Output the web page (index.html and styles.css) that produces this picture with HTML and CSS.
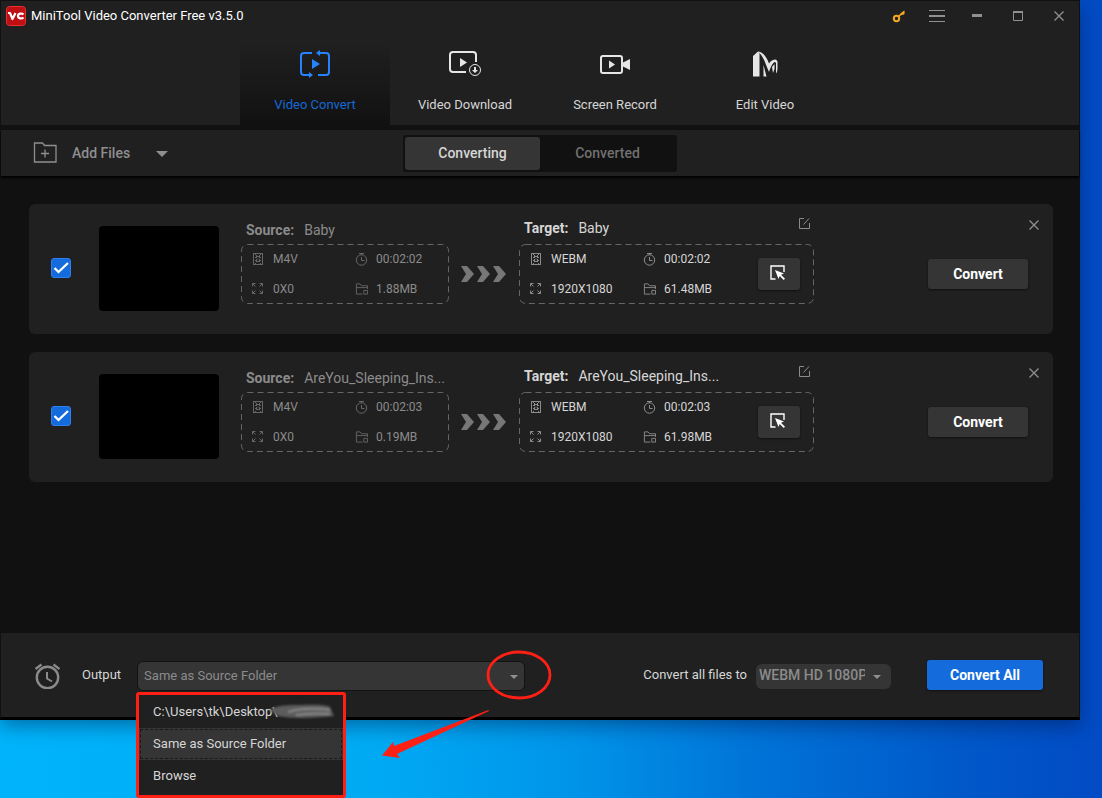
FILE: index.html
```html
<!DOCTYPE html>
<html lang="en">
<head>
<meta charset="utf-8">
<title>MiniTool Video Converter Free v3.5.0</title>
<link rel="stylesheet" href="styles.css">
</head>
<body>
<svg class="sprite" aria-hidden="true">
  <symbol id="i-film" viewBox="0 0 13 14"><path d="M1 1.500h10M1 12.500h10M1.500 1v12M10.500 1v12" fill="none" stroke="currentColor"/><path d="M4.500 3v8M7.500 3v8" stroke="currentColor" stroke-dasharray="3 1"/><path d="M5 4.500h2M5 9.500h2M3 2.500h1M8 2.500h1M3 5.500h1M8 5.500h1M3 8.500h1M8 8.500h1M3 11.500h1M8 11.500h1M5.500 7h1" stroke="currentColor"/></symbol>
  <symbol id="i-clock" viewBox="0 0 13 14"><path d="M4 1.500h5M6.500 2v1M6.500 5v3.500h3" fill="none" stroke="currentColor"/><circle cx="6.500" cy="8" r="5.200" fill="none" stroke="currentColor"/></symbol>
  <symbol id="i-size" viewBox="0 0 13 14"><path d="M.5 4.500v-3h3M.5 1.500l3 3M7.500 1.500h3v3M10.500 1.500l-3 3M.5 8.500v3h3M.5 11.500l3-3M10.500 8.500v3h-3M10.500 11.500l-3-3" fill="none" stroke="currentColor"/></symbol>
  <symbol id="i-folder" viewBox="0 0 14 14"><path d="M8 12.500H1.500v-11h4l1.500 2h6.500V7M1.500 5.500h12M9.500 8.500h4v4h-4z" fill="none" stroke="currentColor"/></symbol>
  <symbol id="i-close" viewBox="0 0 12 12"><path d="M1.500 1.500l9 9M10.500 1.500l-9 9" fill="none" stroke="currentColor" stroke-width="1.300"/></symbol>
  <symbol id="i-chevrons" viewBox="0 0 46 16"><path d="M0 0h6l7 8-7 8H0l5-8zM16 0h6l7 8-7 8h-6l5-8zM32 0h6l7 8-7 8h-6l5-8z" fill="currentColor"/></symbol>
  <symbol id="i-edit" viewBox="0 0 12 12"><path d="M6 1.500H1.500v10h10V6M5.500 7.500L11 1.500" fill="none" stroke="currentColor"/></symbol>
  <symbol id="i-pick" viewBox="0 0 16 16"><path d="M5.500 14H1V1h13v6" fill="none" stroke="currentColor" stroke-width="1.400"/><path d="M5 5l9 3.500-3 1.200 4 4-1.300 1.300-4-4L8.500 14z" fill="currentColor"/></symbol>
  <symbol id="i-check" viewBox="0 0 20 20"><path d="M3.500 10l4 4L17 5" fill="none" stroke="#fff" stroke-width="2.300"/></symbol>
  <symbol id="i-caret" viewBox="0 0 8 4"><path d="M0 0h8L4 4z" fill="currentColor"/></symbol>
</svg>

<main class="window">
  <header class="header">
    <div class="titlebar">
      <svg class="logo" viewBox="0 0 20 20" aria-hidden="true"><rect x=".5" y=".5" width="19" height="19" rx="3" fill="#c00f14" stroke="#e3322f"/><path d="M2 7h2l2.500 6L9.500 7M17.500 8.500c-1.500-1.500-5.500-1.200-5.500 1.500s4 3 5.500 1.500" fill="none" stroke="#fff" stroke-width="2.200" stroke-linejoin="round"/></svg>
      <h1 class="title">MiniTool Video Converter Free v3.5.0</h1>
      <div class="controls">
        <button class="icon-btn key" aria-label="Register"><svg width="14" height="14" viewBox="0 0 14 14"><circle cx="4.500" cy="9.500" r="2.700" fill="none" stroke="currentColor" stroke-width="2"/><path d="M6.500 7.500L12 2.500" stroke="currentColor" stroke-width="1.600"/><path d="M8 5l4.500-3.500V5l-1.500 1-1-.5-1 1z" fill="currentColor"/></svg></button>
        <button class="icon-btn menu-btn" aria-label="Menu"><svg width="16" height="14" viewBox="0 0 16 14"><path d="M0 1.500h16M0 12.500h16" stroke="currentColor"/><path d="M0 7h16" stroke="currentColor" stroke-width="2"/></svg></button>
        <button class="icon-btn" aria-label="Minimize"><svg width="12" height="12" viewBox="0 0 12 12"><path d="M1 5.500h10" stroke="currentColor" stroke-width="3"/></svg></button>
        <button class="icon-btn" aria-label="Maximize"><svg width="12" height="12" viewBox="0 0 12 12"><path d="M1.500 1.500h9v9h-9z" fill="none" stroke="currentColor"/><path d="M1 2h10" stroke="currentColor" stroke-width="2"/></svg></button>
        <button class="icon-btn" aria-label="Close"><svg width="12" height="12"><use href="#i-close"/></svg></button>
      </div>
    </div>
    <nav class="tabs">
      <button class="tab active"><svg width="32" height="28" viewBox="0 0 32 28"><path d="M13 3H5a3 3 0 0 0-3 3v16a3 3 0 0 0 3 3h8M20 3h7a3 3 0 0 1 3 3v16a3 3 0 0 1-3 3h-8" fill="none" stroke="currentColor" stroke-width="2"/><path d="M17 3l4-3v6zM14 25l-4-3v6zM13 9v10l8-5z" fill="currentColor"/></svg><span>Video Convert</span></button>
      <button class="tab"><svg width="32" height="28" viewBox="0 0 32 28"><path d="M17 22H4a3 3 0 0 1-3-3V5a3 3 0 0 1 3-3h20a3 3 0 0 1 3 3v7" fill="none" stroke="currentColor" stroke-width="2"/><path d="M11 8v9l7-4.500z" fill="currentColor"/><circle cx="26" cy="20" r="5.500" fill="none" stroke="currentColor"/><path d="M25 17h2v3h2l-3 3-3-3h2z" fill="currentColor"/></svg><span>Video Download</span></button>
      <button class="tab"><svg width="32" height="28" viewBox="0 0 32 28"><rect x="2" y="6" width="21" height="17" rx="2" fill="none" stroke="currentColor" stroke-width="2"/><path d="M10 10.500v8l6-4zM23 13l8-4v11l-8-4z" fill="currentColor"/></svg><span>Screen Record</span></button>
      <button class="tab"><svg width="32" height="28" viewBox="0 0 32 28"><path d="M4 6l5-4.500L10.500 3v23.500H4z" fill="currentColor"/><path d="M9 1.500c5 .5 8.500 5 11 12 1.500-2.500 4-4 7-4l1.500 2v6c0 3-.5 5-1.500 6V13l-1-1c-2 .5-4.500 5-6 10l-2.500-6C15.500 10 13 5 9 1.500z" fill="currentColor"/><path d="M14.500 15v11.500h3zM23 17l2.500-3v5L24 23z" fill="currentColor"/></svg><span>Edit Video</span></button>
    </nav>
  </header>

  <section class="toolbar">
    <button class="add"><svg width="24" height="22" viewBox="0 0 24 22"><path d="M1.500 20V1h8l2 2.500H23V20zM8 11.500h8M12 7.500v8" fill="none" stroke="currentColor" stroke-width="1.300"/></svg><span>Add Files</span><svg class="add-caret"><use href="#i-caret"/></svg></button>
    <div class="segment"><button class="seg on">Converting</button><button class="seg">Converted</button></div>
  </section>

  <section class="list">
    <article class="card">
      <label class="check"><input type="checkbox" checked aria-label="Select Baby"><svg><use href="#i-check"/></svg></label>
      <div class="thumb"></div>
      <div class="info source">
        <p class="name"><b>Source:</b><span>Baby</span></p>
        <div class="box"><svg class="dash"><rect rx="6"/></svg>
          <div class="meta">
            <span><svg><use href="#i-film"/></svg>M4V</span><span><svg><use href="#i-clock"/></svg>00:02:02</span>
            <span><svg><use href="#i-size"/></svg>0X0</span><span><svg><use href="#i-folder"/></svg>1.88MB</span>
          </div>
        </div>
      </div>
      <svg class="chevrons"><use href="#i-chevrons"/></svg>
      <div class="info target">
        <p class="name"><b>Target:</b><span>Baby</span><button class="edit" aria-label="Rename"><svg width="12" height="12"><use href="#i-edit"/></svg></button></p>
        <div class="box"><svg class="dash"><rect rx="6"/></svg>
          <div class="meta">
            <span><svg><use href="#i-film"/></svg>WEBM</span><span><svg><use href="#i-clock"/></svg>00:02:02</span>
            <span><svg><use href="#i-size"/></svg>1920X1080</span><span><svg><use href="#i-folder"/></svg>61.48MB</span>
          </div>
          <button class="pick" aria-label="Choose format"><svg width="16" height="16"><use href="#i-pick"/></svg></button>
        </div>
      </div>
      <div class="actions">
        <button class="remove" aria-label="Remove"><svg width="12" height="12"><use href="#i-close"/></svg></button>
        <button class="convert">Convert</button>
      </div>
    </article>

    <article class="card">
      <label class="check"><input type="checkbox" checked aria-label="Select AreYou_Sleeping"><svg><use href="#i-check"/></svg></label>
      <div class="thumb"></div>
      <div class="info source">
        <p class="name"><b>Source:</b><span>AreYou_Sleeping_Ins...</span></p>
        <div class="box"><svg class="dash"><rect rx="6"/></svg>
          <div class="meta">
            <span><svg><use href="#i-film"/></svg>M4V</span><span><svg><use href="#i-clock"/></svg>00:02:03</span>
            <span><svg><use href="#i-size"/></svg>0X0</span><span><svg><use href="#i-folder"/></svg>0.19MB</span>
          </div>
        </div>
      </div>
      <svg class="chevrons"><use href="#i-chevrons"/></svg>
      <div class="info target">
        <p class="name"><b>Target:</b><span>AreYou_Sleeping_Ins...</span><button class="edit" aria-label="Rename"><svg width="12" height="12"><use href="#i-edit"/></svg></button></p>
        <div class="box"><svg class="dash"><rect rx="6"/></svg>
          <div class="meta">
            <span><svg><use href="#i-film"/></svg>WEBM</span><span><svg><use href="#i-clock"/></svg>00:02:03</span>
            <span><svg><use href="#i-size"/></svg>1920X1080</span><span><svg><use href="#i-folder"/></svg>61.98MB</span>
          </div>
          <button class="pick" aria-label="Choose format"><svg width="16" height="16"><use href="#i-pick"/></svg></button>
        </div>
      </div>
      <div class="actions">
        <button class="remove" aria-label="Remove"><svg width="12" height="12"><use href="#i-close"/></svg></button>
        <button class="convert">Convert</button>
      </div>
    </article>
  </section>

  <footer class="footer">
    <svg class="alarm" viewBox="0 0 26 26" aria-hidden="true"><circle cx="13.500" cy="14.500" r="10.700" fill="none" stroke="currentColor" stroke-width="2.400"/><path d="M13 9v6.500l5 3" fill="none" stroke="currentColor" stroke-width="2"/><path d="M1.500 6l6-4.500M19.500 1.500l6 4.500" stroke="currentColor" stroke-width="2.200"/></svg>
    <label class="label" for="output">Output</label>
    <div class="field">
      <select id="output" class="select"><option>Same as Source Folder</option></select>
      <svg class="caret"><use href="#i-caret"/></svg>
      <svg class="ring" viewBox="0 0 66 50"><ellipse cx="33" cy="25" rx="31" ry="23" fill="none" stroke="#ff2015" stroke-width="2.800"/></svg>
      <svg class="pointer" viewBox="0 0 108 48"><path d="M106.500 0L107 1 15 44l3 4L0 45.500 11 32l1 4z" fill="#ff2015"/></svg>
      <div class="menu">
        <button class="item path">C:\Users\tk\Desktop\<svg class="smudge" viewBox="0 0 72 20"><defs><filter id="soft"><feGaussianBlur stdDeviation="1.300"/></filter></defs><g filter="url(#soft)"><path d="M3 8c6-4 16-5 28-5 14 0 28-1 33 2l4 9c-18 2-42 3-56 0z" fill="#5c5c5c"/><path d="M22 10c14-4 26-4 42-2M30 13c12-2 20-2 34-1" stroke="#888" stroke-width="2" fill="none"/></g></svg></button>
        <button class="item current">Same as Source Folder</button>
        <button class="item">Browse</button>
      </div>
    </div>
    <label class="label all" for="format">Convert all files to</label>
    <div class="format">
      <select id="format" class="select"><option>WEBM HD 1080P</option></select>
      <svg class="caret"><use href="#i-caret"/></svg>
    </div>
    <button class="convert-all">Convert All</button>
  </footer>
</main>
</body>
</html>
```
FILE: styles.css
```css
* { box-sizing: border-box; }

body {
  margin: 0;
  min-height: 100vh;
  padding: 0 22px 78px 0;
  display: flex;
  font: 13px/20px Roboto, "Liberation Sans", sans-serif;
  color: #d6d6d6;
  background: linear-gradient(90deg, #00b4fb 0%, #00aaf3 34%, #0094e9 52%, #0074d8 68%, #0057c8 88%, #024bc4 100%);
}

button, select, input { font: inherit; color: inherit; margin: 0; }
button { border: 0; padding: 0; background: none; }
svg { display: block; flex: none; }
h1, p { margin: 0; }

.sprite { position: absolute; width: 0; height: 0; }

.window {
  flex: 1;
  min-width: 0;
  display: flex;
  flex-direction: column;
  background: #111;
  border: 1px solid #111;
  border-bottom: 3px solid #000;
  box-shadow: 0 6px 18px rgba(0, 10, 50, .4);
}

.header { background: #202020; margin-bottom: 5px; }

.titlebar { display: flex; align-items: center; height: 30px; padding: 0 14px 0 5px; margin-bottom: 10px; }
.logo { width: 20px; height: 20px; margin-right: 5px; }
.title { font-size: 13px; font-weight: 400; color: #fff; }
.controls { display: flex; align-items: center; margin-left: auto; color: #909090; }
.icon-btn { display: grid; place-items: center; width: 12px; height: 20px; margin-left: 29px; }
.icon-btn.key { width: 14px; color: #f5a623; }
.icon-btn.menu-btn { width: 16px; margin-left: 23px; margin-right: -3px; }

.tabs { display: flex; justify-content: center; }
.tab {
  width: 150px;
  height: 84px;
  display: flex;
  flex-direction: column;
  align-items: center;
  padding-top: 9px;
  gap: 17px;
  color: #d6d6d6;
}
.tab svg { color: #e6e6e6; overflow: visible; }
.tab.active { color: #1669d6; background: linear-gradient(#202020, #111); }
.tab.active svg { color: #2583ff; }

.toolbar {
  display: grid;
  grid-template-columns: 1fr auto 1fr;
  align-items: center;
  height: 46px;
  padding: 0 32px;
  background: #202020;
  box-shadow: 0 2px 2px #000;
}
.add { display: flex; align-items: center; justify-self: start; color: #8f8f8f; font-size: 14px; font-weight: 500; }
.add span { margin: 0 26px 0 15px; }
.add-caret { width: 12px; height: 6px; margin-top: 2px; }
.segment { display: flex; padding: 2px; height: 37px; background: #111; border-radius: 3px; font-size: 14px; font-weight: 500; }
.seg { width: 135px; border-radius: 3px; color: #707070; }
.seg.on { background: #353535; color: #d6d6d6; }

.list { flex: 1; padding: 28px 26px 28px 28px; display: flex; flex-direction: column; gap: 18px; }

.card {
  display: flex;
  align-items: flex-start;
  height: 130px;
  padding: 14px 13px 0 22px;
  border-radius: 6px;
  background: #202020;
}
.check { display: grid; margin: 40px 28px 0 0; }
.check input, .check svg { grid-area: 1 / 1; width: 20px; height: 20px; }
.check input { appearance: none; border: 1px solid #2f80ee; border-radius: 3px; background: #146bdc; }
.check svg { z-index: 1; pointer-events: none; }
.thumb { width: 120px; height: 85px; margin: 8px 22px 0 0; border-radius: 4px; background: #000; }

.info { flex: none; }
.name { display: flex; align-items: center; height: 20px; padding-left: 5px; gap: 10px; font-size: 14px; }
.name b { font-weight: 700; }
.source { width: 208px; color: #8b8b8b; }
.source .name { margin: 2px 0 4px; }
.target { width: 295px; color: #d6d6d6; }
.target .name { margin-bottom: 6px; }
.edit { margin: 0 4px 10px auto; color: #8b8b8b; }

.box { position: relative; display: flex; height: 60px; padding-left: 11px; font-size: 12px; }
.dash { position: absolute; inset: 0; width: 100%; height: 100%; pointer-events: none; }
.dash rect { x: .5px; y: .5px; width: calc(100% - 1px); height: calc(100% - 1px); fill: none; stroke: #666; stroke-dasharray: 6 4; }
.meta { display: grid; grid-template-columns: 103px auto; grid-template-rows: 30px 30px; }
.target .meta { grid-template-columns: 113px auto; }
.meta span { display: flex; align-items: center; gap: 8px; }
.meta svg { width: 13px; height: 14px; color: #666; }
.target .meta svg { color: #8b8b8b; }
.pick {
  display: grid;
  place-items: center;
  width: 42px;
  height: 32px;
  margin: 14px 14px 0 auto;
  padding: 0 2px 2px 0;
  border-radius: 3px;
  background: #353535;
  box-shadow: 0 1px 2px #111;
  color: #fff;
}
.chevrons { width: 46px; height: 16px; margin: 48px 12px 0; color: #777; }

.actions { display: flex; flex-direction: column; width: 112px; margin-left: auto; gap: 28px; }
.remove { align-self: flex-end; margin-top: 1px; color: #909090; }
.convert {
  width: 100px;
  height: 30px;
  border-radius: 3px;
  background: #353535;
  box-shadow: 0 1px 2px #111;
  color: #fff;
  font-size: 14px;
  font-weight: 700;
}

.footer { display: flex; align-items: center; height: 84px; padding: 0 36px 0 33px; background: #202020; }
.alarm { width: 26px; height: 26px; color: #8b8b8b; margin: 2px 22px 0 0; }
.label { flex: none; }
.field { position: relative; width: 388px; height: 30px; margin: 2px 0 0 16px; }
.select { appearance: none; display: block; width: 100%; height: 100%; border: 0; background: #353535; color: #8b8b8b; }
.field .select { border: 1px solid #131313; border-radius: 6px; padding: 0 30px 0 6px; }
.caret { position: absolute; top: 14px; right: 7px; width: 8px; height: 4px; color: #909090; pointer-events: none; }
.ring { position: absolute; top: -11px; right: -27px; width: 66px; height: 50px; pointer-events: none; }
.pointer { position: absolute; top: 49px; left: 245px; width: 108px; height: 48px; pointer-events: none; }

.menu {
  position: absolute;
  top: 31px;
  left: -1px;
  width: 210px;
  display: flex;
  flex-direction: column;
  border: 3px solid #ff2015;
  border-radius: 3px;
  background: #202020;
  padding: 1px 0 3px;
}
.item { position: relative; height: 32px; padding-left: 14px; text-align: left; }
.item.current { background: #353535; outline: 1px dashed #1a1a1a; outline-offset: -2px; }
.smudge { position: absolute; left: 127px; top: 6px; width: 72px; height: 20px; }

.all { margin-left: auto; }
.format { position: relative; width: 135px; height: 25px; margin: 2px 36px 0 9px; }
.format .select { border-radius: 6px; padding: 0 26px 2px 3px; font-size: 14px; font-weight: 500; text-overflow: clip; }
.format .caret { top: 11px; right: 10px; }
.convert-all {
  width: 116px;
  height: 30px;
  border-radius: 3px;
  background: #146bdc;
  box-shadow: 0 1px 2px #111;
  color: #fff;
  font-size: 14px;
  font-weight: 700;
}
```
